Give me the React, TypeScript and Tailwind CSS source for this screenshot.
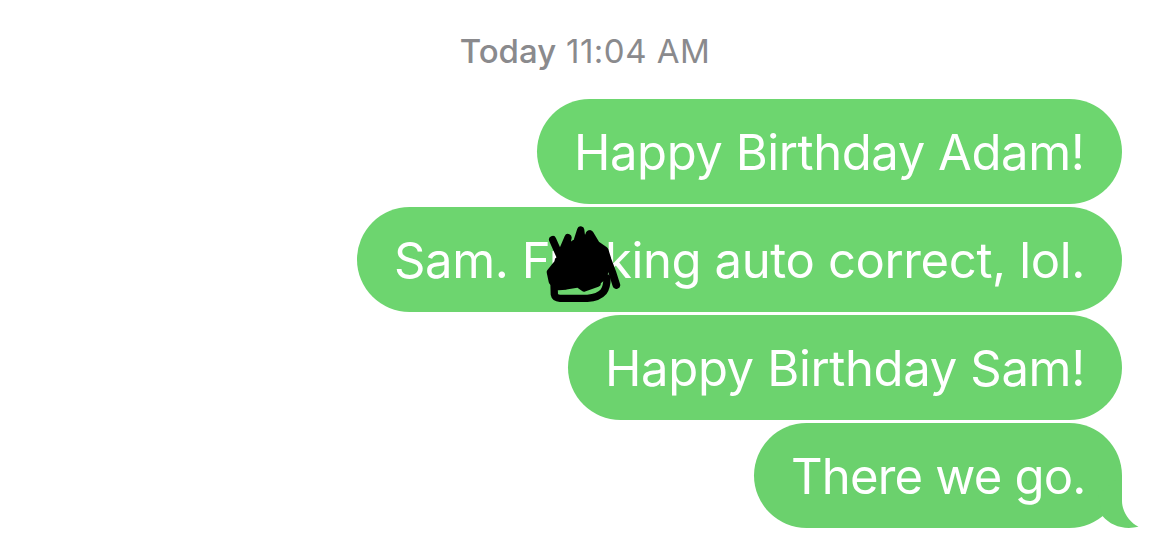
import type { ReactNode } from "react";

interface Message {
  id: number;
  content: ReactNode;
  bubble: string;
  text: string;
}

// marker scribble drawn over the middle of a word
function Scribble() {
  return (
    <svg
      className="absolute left-[153px] top-2 h-[95px] w-[150px]"
      viewBox="0 0 450 285"
      fill="none"
      stroke="#000"
      strokeWidth="20"
      strokeLinecap="round"
      strokeLinejoin="round"
    >
      <path
        d="M138 132L168 110L186 88L205 78L214 60L240 64L262 88L284 125L294 165L286 190L266 206L252 208L234 214L220 222L204 212L180 208L158 212L140 208L124 194L118 172L134 150Z"
        fill="#000"
        strokeWidth="6"
      />
      <path d="M128 74L150 124L174 68L160 134L184 92L201 80L212 45L220 112L238 57L261 104" strokeWidth="22" />
      <path d="M240 58L258 88L284 106L293 135L308 175L319 210" strokeWidth="23" />
      <path d="M138 149L120 171L126 200L145 216L168 214L205 208L222 220L262 206" />
      <path d="M132 207L133 238Q135 249 150 250L232 250Q266 248 281 230Q291 216 291 189" strokeWidth="22" />
    </svg>
  );
}

function Tail() {
  return (
    <svg
      className="absolute left-[344px] top-[52px] h-[53px] w-[41px]"
      viewBox="0 0 41 53"
      fill="#6bd16d"
    >
      <path d="M24 0V26C24 36 31 47 40.500 51.800C26 55 13 51 4.500 41L0 20Z" />
    </svg>
  );
}

const messages: Message[] = [
  {
    id: 1,
    content: "Happy Birthday Adam!",
    bubble: "w-[585px] bg-[#6dd66f] rounded-full",
    text: "tracking-[-0.43px]",
  },
  {
    id: 2,
    content: "Sam. Fucking auto correct, lol.",
    bubble: "w-[765px] bg-[#6dd56f] rounded-full",
    text: "tracking-[-0.38px]",
  },
  {
    id: 3,
    content: "Happy Birthday Sam!",
    bubble: "w-[554px] bg-[#6cd36e] rounded-full",
    text: "tracking-[-0.35px]",
  },
  {
    id: 4,
    content: "There we go.",
    bubble: "w-[368px] bg-[#6bd16d] rounded-full",
    text: "tracking-[-0.8px]",
  },
];

export default function App() {
  return (
    <div className="h-[558px] w-[1170px] overflow-hidden bg-white pt-8 font-['Inter',sans-serif]">
      <div className="flex h-10 items-center justify-center text-[33px] text-[#8a8a8d]">
        <span className="whitespace-pre">
          <span className="font-medium">Today</span>
          <span className="tracking-[0.5px]"> 11:04 AM</span>
        </span>
      </div>

      <div className="mt-[27px] flex flex-col items-end gap-[3px] pr-12">
        {messages.map((m) => (
          <div
            key={m.id}
            className={`relative flex h-[105px] items-center pt-0.5 pl-[37px] text-[49px] whitespace-nowrap text-white ${m.bubble}`}
          >
            <span className={m.text}>{m.content}</span>
            {m.id === 2 && <Scribble />}
            {m.id === 4 && <Tail />}
          </div>
        ))}
      </div>
    </div>
  );
}
